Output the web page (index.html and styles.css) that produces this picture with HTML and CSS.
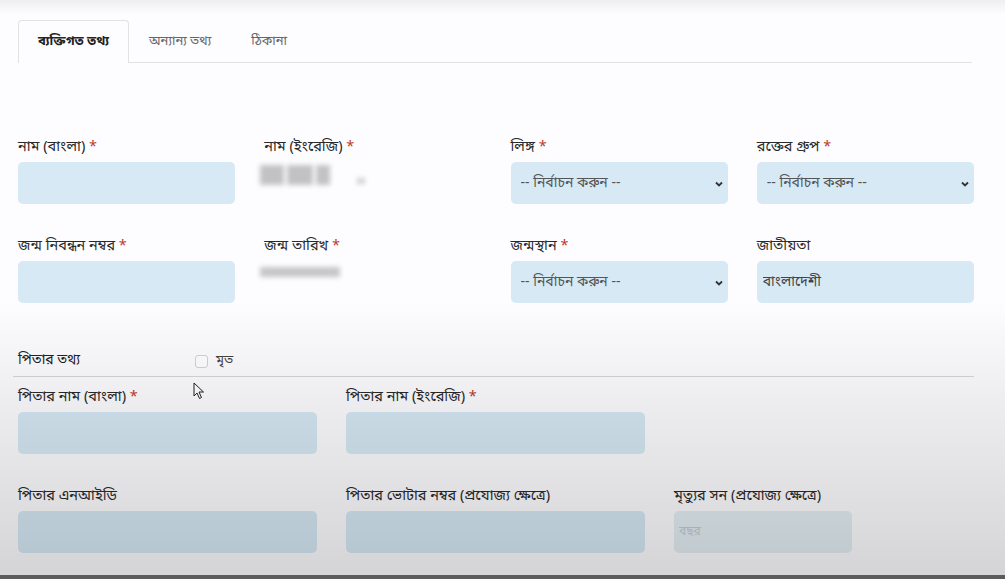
FILE: index.html
```html
<!DOCTYPE html>
<html lang="bn">
<head>
  <meta charset="UTF-8">
  <meta name="viewport" content="width=device-width, initial-scale=1">
  <title>ব্যক্তিগত তথ্য</title>
  <link rel="stylesheet" href="styles.css">
</head>
<body>
  <div class="page">
    <ul class="tabs">
      <li class="tab active">ব্যক্তিগত তথ্য</li>
      <li class="tab">অন্যান্য তথ্য</li>
      <li class="tab">ঠিকানা</li>
    </ul>

    <form class="form">
      <div class="grid4">
        <div class="field">
          <label>নাম (বাংলা) <span class="req">*</span></label>
          <input type="text" class="input">
        </div>
        <div class="field">
          <label>নাম (ইংরেজি) <span class="req">*</span></label>
          <div class="hidden-value">
            <span class="blur b1"></span><span class="blur b2"></span><span class="blur b3"></span><span class="blur b4"></span>
          </div>
        </div>
        <div class="field">
          <label>লিঙ্গ <span class="req">*</span></label>
          <div class="select-wrap">
            <select class="input select"><option>-- নির্বাচন করুন --</option></select>
            <svg class="chev" width="10" height="8" viewBox="0 0 10 8"><path d="M2 2.5 L5 5.5 L8 2.5" fill="none" stroke="#333" stroke-width="1.8"/></svg>
          </div>
        </div>
        <div class="field">
          <label>রক্তের গ্রুপ <span class="req">*</span></label>
          <div class="select-wrap">
            <select class="input select"><option>-- নির্বাচন করুন --</option></select>
            <svg class="chev" width="10" height="8" viewBox="0 0 10 8"><path d="M2 2.5 L5 5.5 L8 2.5" fill="none" stroke="#333" stroke-width="1.8"/></svg>
          </div>
        </div>

        <div class="field">
          <label>জন্ম নিবন্ধন নম্বর <span class="req">*</span></label>
          <input type="text" class="input">
        </div>
        <div class="field">
          <label>জন্ম তারিখ <span class="req">*</span></label>
          <div class="hidden-value">
            <span class="blur date"></span>
          </div>
        </div>
        <div class="field">
          <label>জন্মস্থান <span class="req">*</span></label>
          <div class="select-wrap">
            <select class="input select"><option>-- নির্বাচন করুন --</option></select>
            <svg class="chev" width="10" height="8" viewBox="0 0 10 8"><path d="M2 2.5 L5 5.5 L8 2.5" fill="none" stroke="#333" stroke-width="1.8"/></svg>
          </div>
        </div>
        <div class="field">
          <label>জাতীয়তা</label>
          <input type="text" class="input nation" value="বাংলাদেশী">
        </div>
      </div>

      <div class="section-head">
        <span class="section-title">পিতার তথ্য</span>
        <span class="check"></span>
        <span class="check-label">মৃত</span>
        <svg class="cursor" width="12" height="18" viewBox="0 0 12 18"><path d="M1 1 L1 14 L4 11 L6.5 16.5 L8.5 15.5 L6 10 L10.5 10 Z" fill="#fff" stroke="#222" stroke-width="1"/></svg>
      </div>

      <div class="grid3">
        <div class="field">
          <label>পিতার নাম (বাংলা) <span class="req">*</span></label>
          <input type="text" class="input">
        </div>
        <div class="field">
          <label>পিতার নাম (ইংরেজি) <span class="req">*</span></label>
          <input type="text" class="input">
        </div>
        <div></div>

        <div class="field">
          <label>পিতার এনআইডি</label>
          <input type="text" class="input">
        </div>
        <div class="field">
          <label>পিতার ভোটার নম্বর (প্রযোজ্য ক্ষেত্রে)</label>
          <input type="text" class="input">
        </div>
        <div class="field">
          <label>মৃত্যুর সন (প্রযোজ্য ক্ষেত্রে)</label>
          <input type="text" class="input year" placeholder="বছর">
        </div>
      </div>
    </form>
  </div>
  <div class="bottom-bar"></div>
</body>
</html>
```

FILE: styles.css
```css
body {
  margin: 0;
  height: 579px;
  overflow: hidden;
  background: #fdfcfe;
  font-family: "Noto Sans Bengali", "Lohit Bengali", "Noto Sans", sans-serif;
  font-size: 14px;
  color: #333;
  position: relative;
}
/* screen-recording shading */
body::after {
  content: "";
  position: fixed;
  inset: 0;
  pointer-events: none;
  background:
    linear-gradient(to bottom, rgba(0,0,0,0.06) 0, rgba(0,0,0,0) 14px),
    linear-gradient(to bottom, rgba(0,0,0,0) 52%, rgba(0,0,0,0.07) 72%, rgba(0,0,0,0.16) 100%);
}
.page {
  padding: 20px 31px 0 18px;
}
.tabs {
  list-style: none;
  margin: 0;
  padding: 0;
  display: flex;
  height: 42px;
  border-bottom: 1px solid #e2e2e4;
  margin-right: 2px;
}
.tab {
  padding: 0 19px;
  line-height: 42px;
  color: #666;
  font-size: 13px;
  border: 1px solid transparent;
  border-bottom: none;
}
.tab.active {
  color: #222;
  font-weight: bold;
  background: #fdfcfe;
  border-color: #e2e2e4;
  border-radius: 4px 4px 0 0;
  margin-bottom: -1px;
}
.form {
  margin-top: 76px;
}
.grid4 {
  display: grid;
  grid-template-columns: repeat(4, 1fr);
  column-gap: 29px;
  row-gap: 34px;
}
.grid3 {
  display: grid;
  grid-template-columns: 299px 299px 178px;
  column-gap: 29px;
  row-gap: 34px;
}
.field label {
  display: block;
  height: 18px;
  line-height: 18px;
  margin-bottom: 5px;
  color: #2a2a2a;
  font-size: 14.5px;
  white-space: nowrap;
}
.req {
  color: #c0392b;
}
.input {
  display: block;
  box-sizing: border-box;
  width: 100%;
  height: 42px;
  border: none;
  border-radius: 5px;
  background: #d6e9f5;
  font-family: inherit;
  font-size: 14px;
  color: #444;
  padding: 0 10px;
}
.select-wrap {
  position: relative;
}
.select {
  appearance: none;
  -webkit-appearance: none;
  color: #555;
}
.chev {
  position: absolute;
  right: 4px;
  top: 18px;
}
.nation {
  padding-left: 6px;
}
.year {
  background: #e4eef4;
  padding-left: 5px;
  font-size: 12px;
}
.year::placeholder {
  color: #c4ccd0;
}
.hidden-value {
  box-sizing: border-box;
  height: 42px;
  display: flex;
  align-items: flex-start;
  gap: 3px;
  padding-top: 3px;
}
.blur {
  display: inline-block;
  background: #c2c2c4;
  filter: blur(2.5px);
}
.b1 { width: 24px; height: 20px; margin-left: -4px; }
.b2 { width: 26px; height: 20px; }
.b3 { width: 14px; height: 20px; }
.b4 { width: 8px; height: 6px; margin-left: 24px; margin-top: 13px; background: #cfcfd1; }
.date {
  width: 80px;
  height: 10px;
  margin-top: 3px;
  margin-left: -4px;
  background: #c6c6c8;
}
.section-head {
  position: relative;
  display: flex;
  align-items: center;
  height: 18px;
  margin-top: 49px;
  margin-bottom: 12px;
  padding-bottom: 6px;
  line-height: 18px;
  border-bottom: 1px solid #d8d8da;
  margin-left: -5px;
  padding-left: 5px;
}
.section-title {
  width: 177px;
  color: #222;
  font-size: 14px;
}
.check {
  width: 11px;
  height: 11px;
  border: 1px solid #d4d4d6;
  border-radius: 3px;
  background: #fff;
}
.check-label {
  margin-left: 8px;
  color: #444;
  font-size: 13px;
}
.cursor {
  position: absolute;
  left: 180px;
  top: 30px;
}
.bottom-bar {
  position: absolute;
  left: 0;
  right: 0;
  bottom: 0;
  height: 4px;
  background: #5b5b5d;
  z-index: 2;
}
```
